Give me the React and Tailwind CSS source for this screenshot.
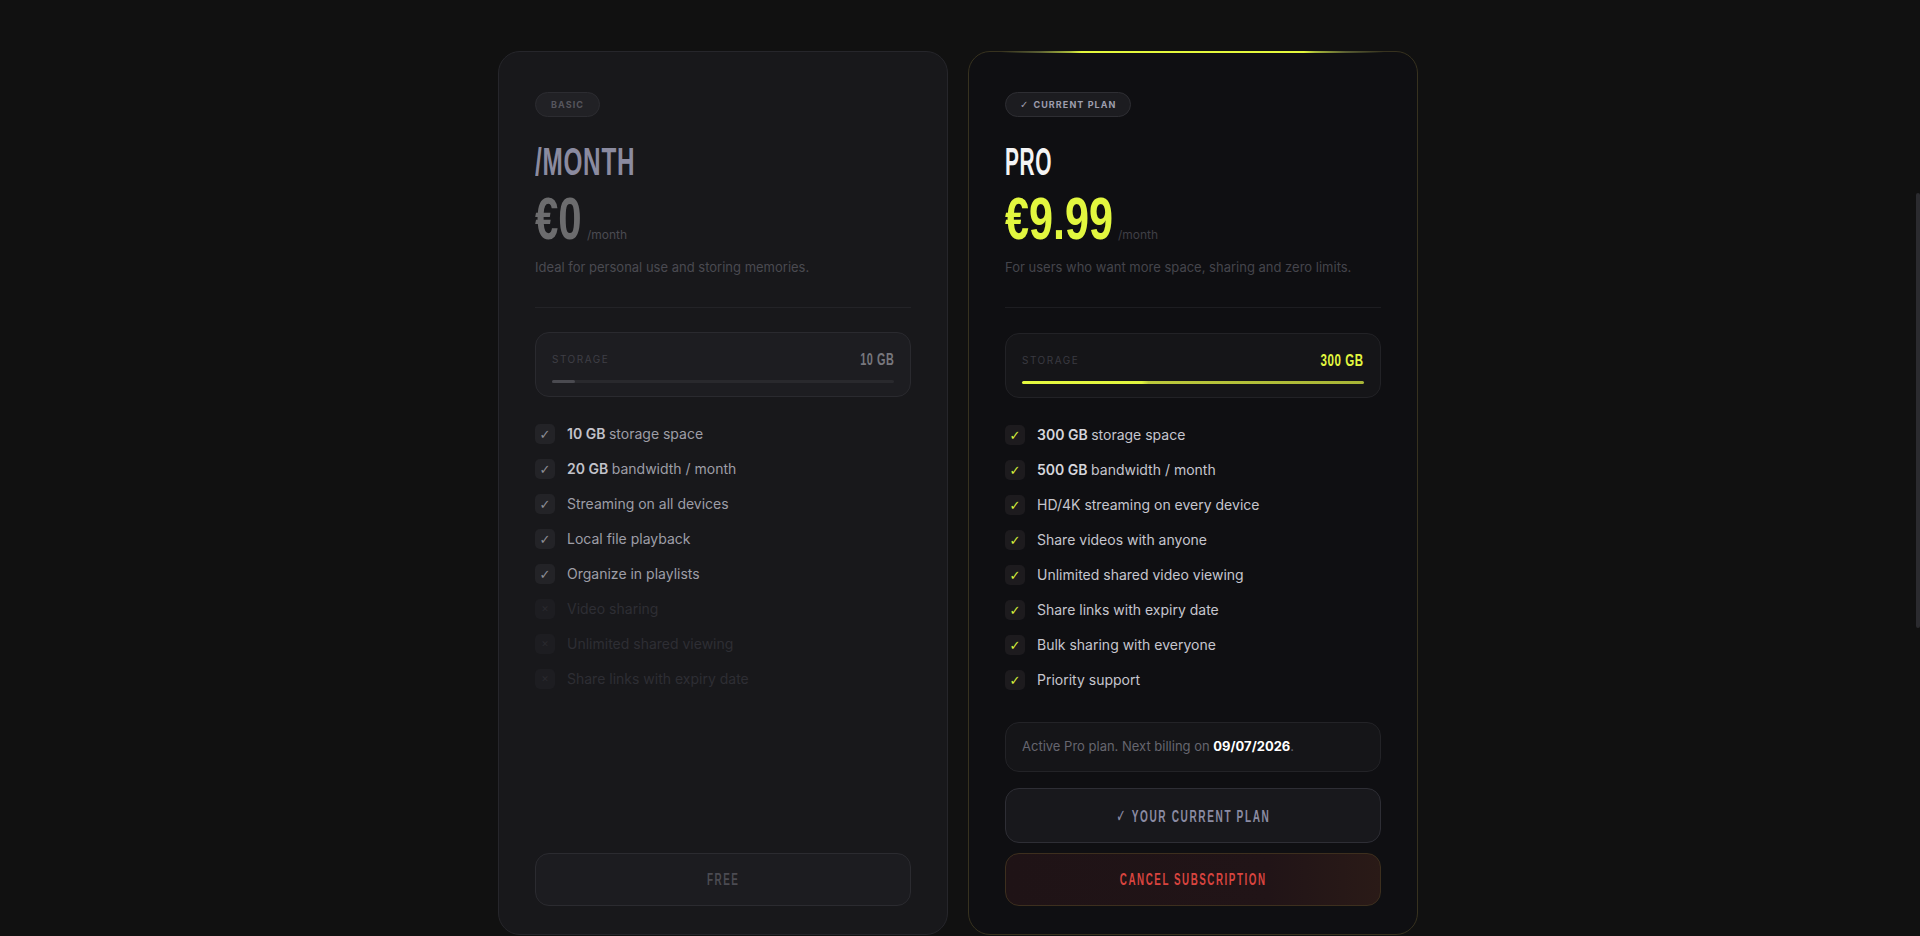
import React from "react";

const COND = "font-['Liberation_Sans',sans-serif] font-bold";

function Check({ tone }) {
  return (
    <span
      className={
        "flex size-[20px] shrink-0 items-center justify-center rounded-[5px] font-['DejaVu_Sans',sans-serif] text-[13px] leading-none " +
        tone
      }
    >
      ✓
    </span>
  );
}

function Cross() {
  return (
    <span className="flex size-[20px] shrink-0 items-center justify-center rounded-[5px] bg-[#1d1d21] font-['DejaVu_Sans',sans-serif] text-[9px] leading-none text-[#2a2a2f]">
      ✕
    </span>
  );
}

function Feature({ bold, text, tone, textTone, boldTone }) {
  return (
    <div className="flex h-[20px] items-center gap-[12px]">
      <Check tone={tone} />
      <span className={"text-[14px] leading-[20px] " + textTone}>
        {bold && <span className={"font-semibold " + boldTone}>{bold} </span>}
        {text}
      </span>
    </div>
  );
}

function Disabled({ text }) {
  return (
    <div className="flex h-[20px] items-center gap-[12px]">
      <Cross />
      <span className="text-[14px] leading-[20px] text-[#2e2e34]">{text}</span>
    </div>
  );
}

function BasicCard() {
  return (
    <div className="flex h-[884px] w-[450px] flex-col rounded-[22px] border border-[#26262b] bg-[#18181b] px-[36px] pt-[40px] pb-[28px]">
      <div className="flex">
        <span className="flex h-[25px] items-center rounded-full border border-[#2c2c31] bg-[#212125] px-[15px] text-[9px] font-bold tracking-[0.12em] text-[#56565d]">
          BASIC
        </span>
      </div>

      <div className={"mt-[26px] h-[38px] text-[38px] leading-none tracking-[0.03em] text-[#8b8ba0] " + COND}>
        <span className="inline-block origin-left [transform:scaleX(0.64)] whitespace-nowrap">/MONTH</span>
      </div>

      <div className="mt-[8px] flex items-baseline">
        <span className={"inline-block w-[47px] text-[60px] leading-none text-[#6c6c6e] " + COND}>
          <span className="inline-block origin-left [transform:scaleX(0.7)] whitespace-nowrap">€0</span>
        </span>
        <span className="ml-[5px] text-[12px] text-[#4b4b52]">/month</span>
      </div>

      <p className="mt-[8px] text-[13px] leading-[20px] text-[#4a4a51]">
        Ideal for personal use and storing memories.
      </p>

      <div className="mt-[30px] h-px bg-[#232327]" />

      <div className="mt-[24px] rounded-[14px] border border-[#2a2a2f] bg-[#1d1d21] px-[16px] pt-[16px] pb-[13px]">
        <div className="flex h-[20px] items-center justify-between">
          <span className="text-[10px] tracking-[0.15em] text-[#3f3f46]">STORAGE</span>
          <span className={"text-[17px] leading-none text-[#77777d] " + COND}>
            <span className="inline-block origin-right [transform:scaleX(0.64)] whitespace-nowrap tracking-[0.05em]">10 GB</span>
          </span>
        </div>
        <div className="mt-[11px] h-[3px] rounded-full bg-[#29292d]">
          <div className="h-[3px] w-[23px] rounded-full bg-[#4a4a50]" />
        </div>
      </div>

      <div className="mt-[27px] flex flex-col gap-[15px]">
        <Feature bold="10 GB" text="storage space" tone="bg-[#232327] text-[#8e8e96]" textTone="text-[#9e9ea7]" boldTone="text-[#c2c2ca]" />
        <Feature bold="20 GB" text="bandwidth / month" tone="bg-[#232327] text-[#8e8e96]" textTone="text-[#9e9ea7]" boldTone="text-[#c2c2ca]" />
        <Feature text="Streaming on all devices" tone="bg-[#232327] text-[#8e8e96]" textTone="text-[#9e9ea7]" boldTone="" />
        <Feature text="Local file playback" tone="bg-[#232327] text-[#8e8e96]" textTone="text-[#9e9ea7]" boldTone="" />
        <Feature text="Organize in playlists" tone="bg-[#232327] text-[#8e8e96]" textTone="text-[#9e9ea7]" boldTone="" />
        <Disabled text="Video sharing" />
        <Disabled text="Unlimited shared viewing" />
        <Disabled text="Share links with expiry date" />
      </div>

      <button className="mt-auto flex h-[53px] items-center justify-center rounded-[14px] border border-[#2b2b30] bg-[#1c1c20]">
        <span className={"text-[16px] leading-none tracking-[0.15em] text-[#4b4b52] " + COND}>
          <span className="inline-block [transform:scaleX(0.62)]">FREE</span>
        </span>
      </button>
    </div>
  );
}

function ProCard() {
  const tone = "bg-[#1d1b1e] text-[#d6ef3b]";
  const tt = "text-[#c6c6ce]";
  const bt = "text-[#d6d6dc]";
  return (
    <div className="relative flex h-[884px] w-[450px] flex-col rounded-[22px] border border-[#37321f] bg-[#0f0f12] px-[36px] pt-[40px] pb-[28px]">
      {/* glowing edge along the top of the highlighted plan */}
      <div className="absolute -top-px right-[33px] left-[32px] h-[2px] bg-[linear-gradient(90deg,transparent,#5a5e33_10%,#a9ba3a_18%,#e4f83c_21%,#e4f83c_79%,#a9ba3a_82%,#5a5e33_90%,transparent)]" />

      <div className="flex">
        <span className="flex h-[25px] items-center rounded-full border border-[#2e2e33] bg-[#1c1c20] px-[14px] text-[9px] font-bold tracking-[0.12em] text-[#9e9eae]">
          <span className="mr-[4px] font-['DejaVu_Sans',sans-serif] text-[10px] font-normal">✓</span>
          CURRENT PLAN
        </span>
      </div>

      <div className={"mt-[26px] h-[38px] text-[38px] leading-none tracking-[0.03em] text-[#f4f4f5] " + COND}>
        <span className="inline-block origin-left [transform:scaleX(0.55)] whitespace-nowrap">PRO</span>
      </div>

      <div className="mt-[8px] flex items-baseline">
        <span className={"inline-block w-[108px] text-[60px] leading-none text-[#e2f73f] " + COND}>
          <span className="inline-block origin-left [transform:scaleX(0.72)] whitespace-nowrap">€9.99</span>
        </span>
        <span className="ml-[5px] text-[12px] text-[#3f3f46]">/month</span>
      </div>

      <p className="mt-[8px] text-[13px] leading-[20px] text-[#45454c]">
        For users who want more space, sharing and zero limits.
      </p>

      <div className="mt-[30px] h-px bg-[#1d1d21]" />

      <div className="mt-[25px] rounded-[14px] border border-[#222226] bg-[#151518] px-[16px] pt-[16px] pb-[13px]">
        <div className="flex h-[20px] items-center justify-between">
          <span className="text-[10px] tracking-[0.15em] text-[#3a3a41]">STORAGE</span>
          <span className={"text-[17px] leading-none text-[#e2f73f] " + COND}>
            <span className="inline-block origin-right [transform:scaleX(0.68)] whitespace-nowrap tracking-[0.05em]">300 GB</span>
          </span>
        </div>
        <div className="mt-[11px] h-[3px] rounded-full bg-[linear-gradient(90deg,#e4f83f_0%,#e0f43e_35%,#bcc93b_37%,#a7b436_100%)]" />
      </div>

      <div className="mt-[27px] flex flex-col gap-[15px]">
        <Feature bold="300 GB" text="storage space" tone={tone} textTone={tt} boldTone={bt} />
        <Feature bold="500 GB" text="bandwidth / month" tone={tone} textTone={tt} boldTone={bt} />
        <Feature text="HD/4K streaming on every device" tone={tone} textTone={tt} boldTone={bt} />
        <Feature text="Share videos with anyone" tone={tone} textTone={tt} boldTone={bt} />
        <Feature text="Unlimited shared video viewing" tone={tone} textTone={tt} boldTone={bt} />
        <Feature text="Share links with expiry date" tone={tone} textTone={tt} boldTone={bt} />
        <Feature text="Bulk sharing with everyone" tone={tone} textTone={tt} boldTone={bt} />
        <Feature text="Priority support" tone={tone} textTone={tt} boldTone={bt} />
      </div>

      <div className="mt-auto flex h-[50px] items-center rounded-[14px] border border-[#232327] bg-[#151518] px-[16px] text-[13px] text-[#66666f]">
        <span>
          Active Pro plan. Next billing on <span className="font-bold text-white">09/07/2026</span>.
        </span>
      </div>

      <button className="mt-[16px] flex h-[55px] items-center justify-center rounded-[14px] border border-[#2e2e35] bg-[#18181c]">
        <span className={"text-[16px] leading-none tracking-[0.16em] text-[#8b8ba3] " + COND}>
          <span className="inline-block [transform:scaleX(0.63)] whitespace-nowrap">
            <span className="font-['DejaVu_Sans',sans-serif] text-[18px] font-normal">✓</span> YOUR CURRENT PLAN
          </span>
        </span>
      </button>

      <button className="mt-[10px] flex h-[53px] items-center justify-center rounded-[14px] border border-[#3d2f1e] bg-[linear-gradient(90deg,#1f1316,#211417_70%,#2a1a17)]">
        <span className={"text-[16px] leading-none tracking-[0.16em] text-[#d9443f] " + COND}>
          <span className="inline-block [transform:scaleX(0.61)] whitespace-nowrap">CANCEL SUBSCRIPTION</span>
        </span>
      </button>
    </div>
  );
}

export default function App() {
  return (
    <div className="relative h-[936px] overflow-hidden bg-[#111111] font-['Inter',sans-serif]">
      <div className="flex justify-center gap-[20px] pt-[51px] pr-[4px]">
        <BasicCard />
        <ProCard />
      </div>
      {/* page scrollbar thumb */}
      <div className="absolute top-[193px] right-0 h-[435px] w-[4px] rounded-full bg-[#2b2b2f]" />
    </div>
  );
}
